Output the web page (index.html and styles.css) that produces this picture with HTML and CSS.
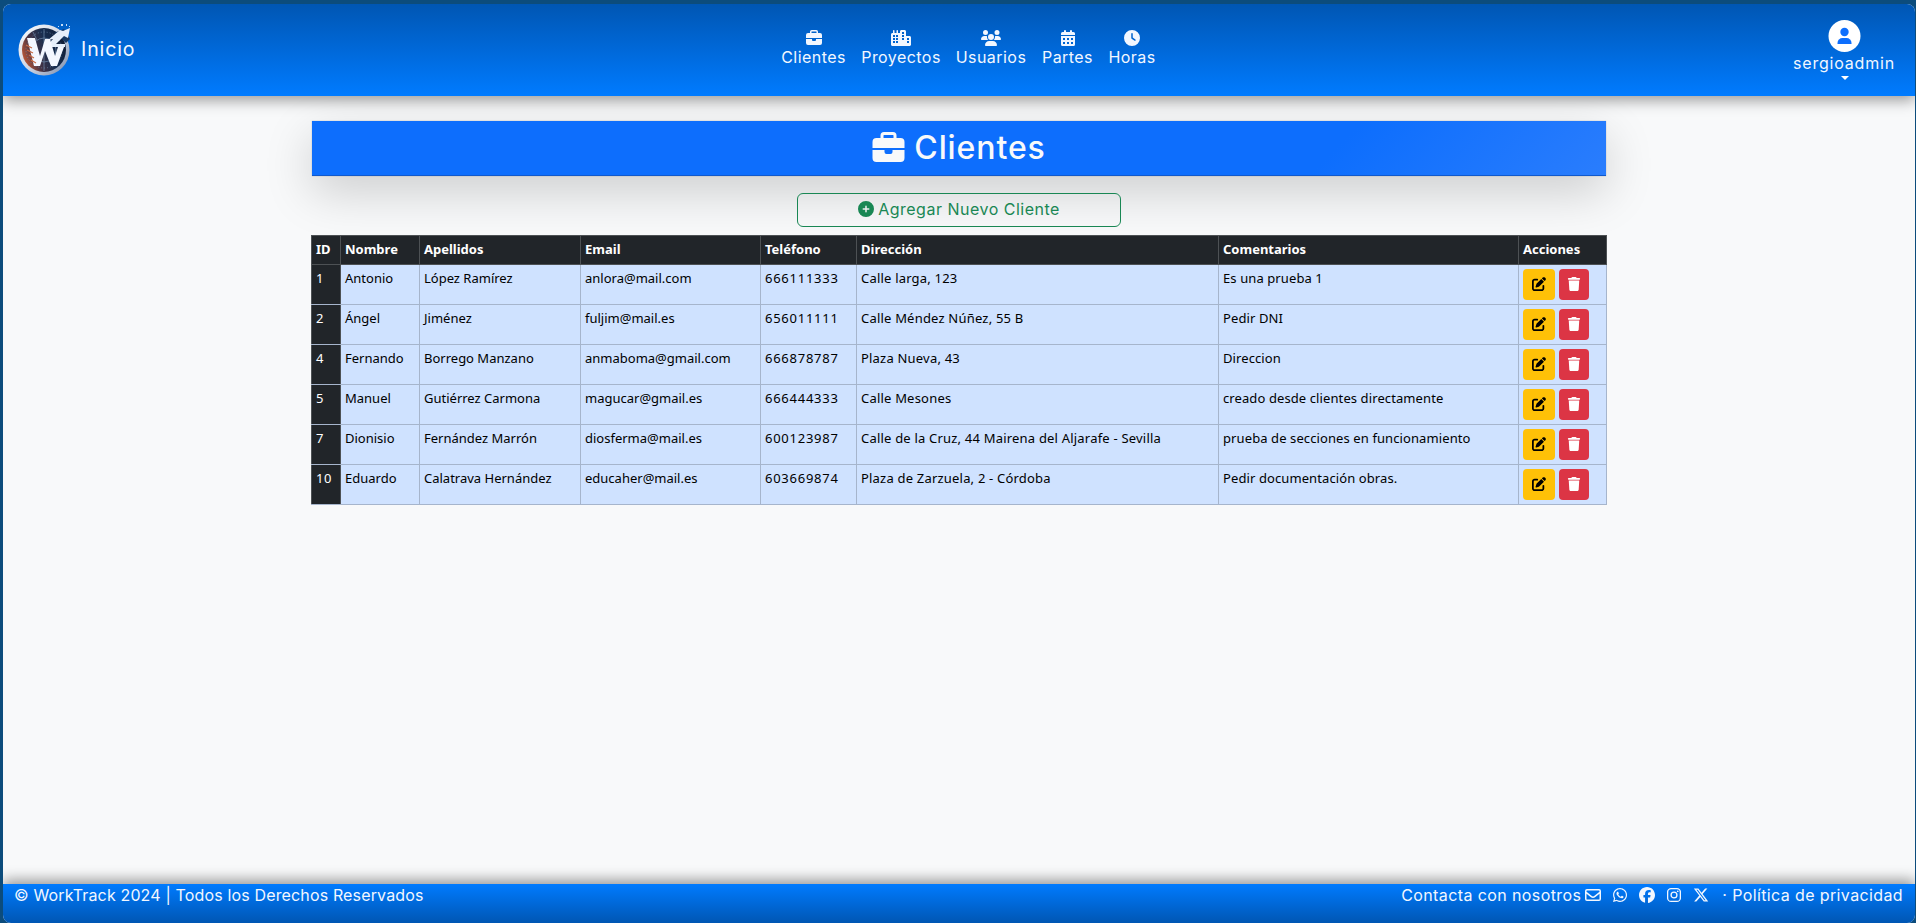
FILE: index.html
```html
<!DOCTYPE html>
<html lang="es">
<head>
<meta charset="utf-8">
<title>WorkTrack - Clientes</title>
<link rel="stylesheet" href="styles.css">
</head>
<body>
<svg class="defs" aria-hidden="true">
  <symbol id="briefcase" viewBox="0 0 512 512"><path fill-rule="evenodd" d="M184 0H328a56 56 0 0 1 56 56V96H448a64 64 0 0 1 64 64V256H0V160A64 64 0 0 1 64 96H128V56A56 56 0 0 1 184 0zM184 48a8 8 0 0 0-8 8V96H336V56a8 8 0 0 0-8-8zM0 288H192V320a32 32 0 0 0 32 32H288a32 32 0 0 0 32-32V288H512V416a64 64 0 0 1-64 64H64a64 64 0 0 1-64-64z"/></symbol>
  <symbol id="city" viewBox="0 0 640 512"><path fill-rule="evenodd" d="M480 48c0-26.500-21.500-48-48-48H336c-26.500 0-48 21.500-48 48V96H224V24a24 24 0 0 0-48 0V96H112V24a24 24 0 0 0-48 0V96H48C21.500 96 0 117.500 0 144V464c0 26.500 21.500 48 48 48H592c26.500 0 48-21.500 48-48V240c0-26.500-21.500-48-48-48H480zM64 160h64v64H64zM160 160h64v64h-64zM64 256h64v64H64zM160 256h64v64h-64zM64 352h64v64H64zM160 352h64v64h-64zM352 64h64v64h-64zM352 160h64v64h-64zM352 256h64v64h-64zM512 256h64v64h-64zM512 352h64v64h-64z"/></symbol>
  <symbol id="users" viewBox="0 0 640 512"><path d="M144 0a80 80 0 1 1 0 160A80 80 0 1 1 144 0zM512 0a80 80 0 1 1 0 160A80 80 0 1 1 512 0zM0 298.700C0 239.800 47.800 192 106.700 192h42.700c15.900 0 31 3.500 44.600 9.700c-1.300 7.200-1.900 14.700-1.900 22.300c0 38.200 16.800 72.500 43.300 96H21.300C9.600 320 0 310.400 0 298.700zM404.600 320c26.600-23.500 43.300-57.800 43.300-96c0-7.600-.7-15-1.900-22.300c13.600-6.300 28.700-9.700 44.600-9.700h42.700C592.200 192 640 239.800 640 298.700c0 11.800-9.600 21.300-21.300 21.300zM224 224a96 96 0 1 1 192 0 96 96 0 1 1-192 0zM128 485.300C128 411.700 187.700 352 261.300 352H378.700C452.300 352 512 411.700 512 485.300c0 14.700-11.900 26.700-26.700 26.700H154.700c-14.700 0-26.700-11.900-26.700-26.700z"/></symbol>
  <symbol id="calendar" viewBox="0 0 448 512"><path fill-rule="evenodd" d="M128 0a32 32 0 0 1 32 32V64H288V32a32 32 0 0 1 64 0V64h48a48 48 0 0 1 48 48v48H0V112A48 48 0 0 1 48 64H96V32a32 32 0 0 1 32-32zM0 192H448V464a48 48 0 0 1-48 48H48a48 48 0 0 1-48-48zM64 256v64h64v-64zM192 256v64h64v-64zM320 256v64h64v-64zM64 384v64h64v-64zM192 384v64h64v-64zM320 384v64h64v-64z"/></symbol>
  <symbol id="clock" viewBox="0 0 512 512"><path fill-rule="evenodd" d="M256 0a256 256 0 1 1 0 512A256 256 0 1 1 256 0zM232 120V256c0 8 4 15.500 10.700 20l96 64c11 7.400 25.900 4.400 33.300-6.700s4.400-25.900-6.700-33.300L280 243.200V120a24 24 0 0 0-48 0z"/></symbol>
  <symbol id="plus" viewBox="0 0 512 512"><path fill-rule="evenodd" d="M256 512A256 256 0 1 0 256 0a256 256 0 1 0 0 512zM232 344V280H168a24 24 0 0 1 0-48h64V168a24 24 0 0 1 48 0v64h64a24 24 0 0 1 0 48H280v64a24 24 0 0 1-48 0z"/></symbol>
  <symbol id="edit" viewBox="0 0 512 512"><path d="M471.600 21.700c-21.900-21.900-57.300-21.900-79.200 0L362.300 51.700l97.900 97.900 30.100-30.100c21.900-21.900 21.900-57.300 0-79.200zM172.400 241.700c-6.100 6.100-10.800 13.600-13.500 21.900l-29.600 88.800c-2.900 8.600-.6 18.100 5.800 24.600s15.900 8.700 24.600 5.800l88.800-29.600c8.200-2.700 15.700-7.400 21.900-13.500L437.700 172.300 339.700 74.300zM96 64C43 64 0 107 0 160V416c0 53 43 96 96 96H352c53 0 96-43 96-96V320a32 32 0 0 0-64 0v96a32 32 0 0 1-32 32H96a32 32 0 0 1-32-32V160a32 32 0 0 1 32-32h96a32 32 0 0 0 0-64z"/></symbol>
  <symbol id="trash" viewBox="0 0 448 512"><path d="M135.200 17.700L128 32H32a32 32 0 0 0 0 64H416a32 32 0 0 0 0-64H320l-7.200-14.300C307.400 6.800 296.300 0 284.200 0H163.800c-12.100 0-23.200 6.800-28.600 17.700zM416 128H32L53.200 467c1.600 25.300 22.600 45 47.900 45H346.900c25.300 0 46.300-19.700 47.900-45z"/></symbol>
  <symbol id="mail" viewBox="0 0 512 512"><path fill-rule="evenodd" d="M64 112a16 16 0 0 0-16 16v22.100L220.500 291.700c20.700 17 50.400 17 71.100 0L464 150.100V128a16 16 0 0 0-16-16zM48 212.200V384a16 16 0 0 0 16 16H448a16 16 0 0 0 16-16V212.200L322 328.800c-38.400 31.500-93.700 31.500-132 0zM0 128A64 64 0 0 1 64 64H448a64 64 0 0 1 64 64V384a64 64 0 0 1-64 64H64a64 64 0 0 1-64-64z"/></symbol>
  <symbol id="whatsapp" viewBox="0 0 448 512"><path d="M380.900 97.100C339 55.100 283.200 32 223.900 32c-122.400 0-222 99.600-222 222 0 39.100 10.200 77.300 29.600 111L0 480l117.700-30.900c32.400 17.700 68.900 27 106.100 27h.1c122.300 0 224.100-99.600 224.100-222 0-59.300-25.200-115-67.100-157zm-157 341.600c-33.200 0-65.700-8.900-94-25.700l-6.700-4-69.800 18.300L72 359.200l-4.400-7c-18.500-29.400-28.200-63.300-28.200-98.200 0-101.700 82.800-184.500 184.600-184.500 49.300 0 95.600 19.200 130.400 54.100 34.800 34.900 56.200 81.200 56.100 130.500 0 101.800-84.900 184.600-186.600 184.600zm101.200-138.200c-5.500-2.800-32.800-16.200-37.900-18-5.100-1.900-8.800-2.800-12.500 2.800-3.700 5.600-14.300 18-17.600 21.800-3.200 3.700-6.500 4.200-12 1.400-32.600-16.300-54-29.100-75.500-66-5.700-9.800 5.700-9.100 16.300-30.300 1.800-3.700.9-6.900-.5-9.700-1.400-2.800-12.500-30.100-17.100-41.200-4.500-10.800-9.100-9.300-12.500-9.500-3.200-.2-6.900-.2-10.600-.2-3.700 0-9.700 1.400-14.800 6.900-5.100 5.600-19.400 19-19.400 46.300 0 27.300 19.900 53.700 22.600 57.400 2.800 3.700 39.100 59.700 94.800 83.800 35.200 15.200 49 16.500 66.600 13.900 10.700-1.600 32.800-13.400 37.400-26.400 4.600-13 4.600-24.100 3.200-26.400-1.300-2.500-5-3.900-10.500-6.600z"/></symbol>
  <symbol id="facebook" viewBox="0 0 512 512"><path d="M512 256C512 114.600 397.400 0 256 0S0 114.600 0 256c0 120 82.700 220.800 194.200 248.500V334.200h-52.800V256h52.800v-33.700c0-87.100 39.400-127.500 125-127.500 16.200 0 44.200 3.200 55.700 6.400V172c-6-.6-16.500-1-29.600-1-42 0-58.200 15.900-58.200 57.200V256h83.600l-14.400 78.200h-69.300v175.900C413.800 494.800 512 386.900 512 256z"/></symbol>
  <symbol id="instagram" viewBox="0 0 448 512"><rect x="20" y="52" width="408" height="408" rx="112" fill="none" stroke="currentColor" stroke-width="42"/><circle cx="224" cy="256" r="94" fill="none" stroke="currentColor" stroke-width="42"/><circle cx="344" cy="136" r="27"/></symbol>
  <symbol id="x" viewBox="0 0 512 512"><path fill-rule="evenodd" d="M389.200 48h70.600L305.600 224.200 487 464H345L233.700 318.600 106.500 464H35.800L200.700 275.500 26.800 48H172.400L272.900 180.900zM364.400 421.800h39.100L151.100 88h-42z"/></symbol>
</svg>
<div class="page">
  <header class="navbar">
    <a class="brand">
      <svg class="logo" viewBox="0 0 54 54">
        <defs>
          <linearGradient id="rim" x1="0" y1="0" x2="1" y2="1"><stop offset="0" stop-color="#fff"/><stop offset=".55" stop-color="#cbd3e2"/><stop offset="1" stop-color="#7486a6"/></linearGradient>
          <linearGradient id="dial" x1="0" y1=".7" x2="1" y2=".3"><stop offset="0" stop-color="#c55b35"/><stop offset=".3" stop-color="#443244"/><stop offset=".6" stop-color="#172e50"/><stop offset="1" stop-color="#101c35"/></linearGradient>
        </defs>
        <circle cx="26" cy="28" r="25.500" fill="url(#rim)"/>
        <circle cx="26" cy="28" r="22" fill="url(#dial)"/>
        <g fill="none" stroke="#708baa" stroke-width=".7"><circle cx="26" cy="28" r="18" stroke-dasharray="1 2"/><circle cx="26" cy="28" r="12"/><path d="M26 7v42M15 10l4 8M35 45l-3-7"/></g>
        <path d="M36 11l10-4 6 10-4 4-5-5z" fill="#173963"/>
        <path d="M30 18l12-10 3 1 7-3-2 10-4-2-8 8h9v3H30v-2l5-6z" fill="#e6effb"/>
        <path d="M9 16h8l5 18 5-17h5l5 17 3-9h6l-7 19h-6l-6-15-5 15h-6z" fill="#f4f7ff"/>
        <path d="M8 23l6 3M9 28l6 3M11 33l5 3M13 38l5 3" stroke="#c96b45" stroke-width="1.200"/>
        <path d="M43 2h2v2h-2zM48 2h1v2h-1zM40 4h1v1h-1zM51 4h1v1h-1z" fill="#c6ddf6"/>
      </svg>
      <span class="brand-text">Inicio</span>
    </a>
    <nav class="menu">
      <a class="item clientes"><svg class="w16"><use href="#briefcase"/></svg><span>Clientes</span></a>
      <a class="item proyectos"><svg class="w20"><use href="#city"/></svg><span>Proyectos</span></a>
      <a class="item usuarios"><svg class="w20"><use href="#users"/></svg><span>Usuarios</span></a>
      <a class="item partes"><svg class="w14"><use href="#calendar"/></svg><span>Partes</span></a>
      <a class="item horas"><svg class="w16"><use href="#clock"/></svg><span>Horas</span></a>
    </nav>
    <a class="user">
      <svg class="avatar" viewBox="0 0 32 32"><circle cx="16" cy="16" r="16" fill="#fff"/><circle cx="16" cy="12" r="4.200" fill="#0d6efd"/><path d="M9 24v-1a5 5 0 0 1 5-5h4a5 5 0 0 1 5 5v1z" fill="#0d6efd"/></svg>
      <span>sergioadmin</span>
      <i class="caret"></i>
    </a>
  </header>
  <main class="content">
    <h1 class="title"><svg><use href="#briefcase"/></svg><span>Clientes</span></h1>
    <a class="add"><svg><use href="#plus"/></svg><span>Agregar Nuevo Cliente</span></a>
    <table class="clients">
      <colgroup><col class="c-id"><col class="c-name"><col class="c-last"><col class="c-mail"><col class="c-tel"><col class="c-dir"><col class="c-com"><col class="c-act"></colgroup>
      <thead><tr><th>ID</th><th>Nombre</th><th>Apellidos</th><th>Email</th><th>Teléfono</th><th>Dirección</th><th>Comentarios</th><th>Acciones</th></tr></thead>
      <tbody>
        <tr><td class="id">1</td><td>Antonio</td><td>López Ramírez</td><td>anlora@mail.com</td><td class="tel">666111333</td><td class="dir">Calle larga, 123</td><td class="com">Es una prueba 1</td><td class="act"><div class="actions"><a class="btn edit"><svg><use href="#edit"/></svg></a><a class="btn del"><svg><use href="#trash"/></svg></a></div></td></tr>
        <tr><td class="id">2</td><td>Ángel</td><td>Jiménez</td><td>fuljim@mail.es</td><td class="tel">656011111</td><td class="dir">Calle Méndez Núñez, 55 B</td><td class="com">Pedir DNI</td><td class="act"><div class="actions"><a class="btn edit"><svg><use href="#edit"/></svg></a><a class="btn del"><svg><use href="#trash"/></svg></a></div></td></tr>
        <tr><td class="id">4</td><td>Fernando</td><td>Borrego Manzano</td><td>anmaboma@gmail.com</td><td class="tel">666878787</td><td class="dir">Plaza Nueva, 43</td><td class="com">Direccion</td><td class="act"><div class="actions"><a class="btn edit"><svg><use href="#edit"/></svg></a><a class="btn del"><svg><use href="#trash"/></svg></a></div></td></tr>
        <tr><td class="id">5</td><td>Manuel</td><td>Gutiérrez Carmona</td><td>magucar@gmail.es</td><td class="tel">666444333</td><td class="dir">Calle Mesones</td><td class="com">creado desde clientes directamente</td><td class="act"><div class="actions"><a class="btn edit"><svg><use href="#edit"/></svg></a><a class="btn del"><svg><use href="#trash"/></svg></a></div></td></tr>
        <tr><td class="id">7</td><td>Dionisio</td><td>Fernández Marrón</td><td>diosferma@mail.es</td><td class="tel">600123987</td><td class="dir">Calle de la Cruz, 44 Mairena del Aljarafe - Sevilla</td><td class="com">prueba de secciones en funcionamiento</td><td class="act"><div class="actions"><a class="btn edit"><svg><use href="#edit"/></svg></a><a class="btn del"><svg><use href="#trash"/></svg></a></div></td></tr>
        <tr><td class="id">10</td><td>Eduardo</td><td>Calatrava Hernández</td><td>educaher@mail.es</td><td class="tel">603669874</td><td class="dir">Plaza de Zarzuela, 2 - Córdoba</td><td class="com">Pedir documentación obras.</td><td class="act"><div class="actions"><a class="btn edit"><svg><use href="#edit"/></svg></a><a class="btn del"><svg><use href="#trash"/></svg></a></div></td></tr>
      </tbody>
    </table>
  </main>
  <footer class="footer">
    <span class="copy">© WorkTrack 2024 | Todos los Derechos Reservados</span>
    <div class="contact">
      <span class="contact-text">Contacta con nosotros</span>
      <div class="social"><svg class="w16"><use href="#mail"/></svg><svg class="w14"><use href="#whatsapp"/></svg><svg class="w16"><use href="#facebook"/></svg><svg class="w14"><use href="#instagram"/></svg><svg class="w16"><use href="#x"/></svg></div>
      <span class="privacy">· Política de privacidad</span>
    </div>
  </footer>
</div>
</body>
</html>
```
FILE: styles.css
```css
* { box-sizing: border-box; }
html, body { height: 100%; }
body { margin: 0; padding: 4px 1px 0 3px; overflow: hidden; background: #0c4c7c; font: 16px/24px Inter, sans-serif; }
svg { display: block; fill: currentColor; flex: none; }
.defs { display: none; }
.page { height: 919px; display: flex; flex-direction: column; background: #f8f9fa; border-radius: 8px; overflow: hidden; }
.navbar { height: 92px; flex: none; display: grid; grid-template-columns: 1fr auto 1fr; background: linear-gradient(#0056b3, #007bff); color: #f2f7ff; box-shadow: 0 4px 14px rgba(0,0,0,.4); z-index: 1; }
.brand { display: flex; align-items: center; padding: 0 0 3px 15px; }
.logo { width: 54px; height: 54px; }
.brand-text { font-size: 19.500px; margin-left: 9px; letter-spacing: .9px; }
.menu { display: flex; gap: 17px; padding: 26px 0 0 18px; }
.item { display: flex; flex-direction: column; align-items: center; white-space: nowrap; }
.item span { margin-top: -1px; letter-spacing: .45px; }
.clientes { width: 64px; } .proyectos { width: 77px; } .usuarios { width: 69px; } .partes { width: 50px; } .horas { width: 45px; }
.w16 { width: 16px; height: 16px; }
.w20 { width: 20px; height: 16px; }
.w14 { width: 14px; height: 16px; }
.user { justify-self: end; display: flex; flex-direction: column; align-items: center; width: 102px; margin-right: 20px; padding-top: 16px; }
.avatar { width: 33px; height: 32px; }
.user span { margin-top: -1px; letter-spacing: .8px; }
.caret { margin: 1px 0 0 2px; border: 4px solid transparent; border-top-color: #fff; border-bottom: 0; }
.content { flex: 1; width: 1296px; margin: 0 auto; display: flex; flex-direction: column; align-items: center; padding-top: 25px; }
.title { margin: 0; width: 1294px; height: 55px; padding-bottom: 2px; display: flex; justify-content: center; align-items: center; gap: 9px; font-size: 32px; font-weight: 500; line-height: 38px; color: #f8f9fa; background: linear-gradient(135deg, #0d6efd 78%, #2a7dfd); box-shadow: inset 0 -1px #1059cc, 0 0 1px rgba(0,0,0,.3), 0 16px 48px rgba(0,0,0,.175); }
.title svg { width: 33px; height: 32px; }
.title span { letter-spacing: .9px; }
.add { width: 324px; height: 34px; flex: none; margin: 17px 0 8px; padding-bottom: 2px; border: 1px solid #198754; border-radius: 6px; display: flex; align-items: center; justify-content: center; gap: 4px; color: #198754; }
.add svg { width: 16px; height: 16px; }
.add span { letter-spacing: .5px; }
.clients { width: 1296px; table-layout: fixed; border-collapse: collapse; font: 13px/20px "Noto Sans", sans-serif; color: #000; }
.c-id { width: 29px; } .c-name { width: 79px; } .c-last { width: 161px; } .c-mail { width: 180px; } .c-tel { width: 96px; } .c-dir { width: 362px; } .c-com { width: 300px; } .c-act { width: 88px; }
.clients th, .clients td { text-align: left; vertical-align: top; padding: 3px 0 0 4px; white-space: nowrap; border: 1px solid #a6b5cc; }
.clients th { height: 29px; background: #212529; color: #fff; border-color: #4d5154; }
.clients td { height: 40px; background: #cfe2ff; }
.clients .act { padding-top: 4px; }
.clients .id { background: #212529; color: #fff; border-left-color: #4d5154; border-right-color: #4d5154; letter-spacing: .5px; }
.tel { letter-spacing: .75px; }
.dir { letter-spacing: .2px; }
.com { letter-spacing: .1px; }
.actions { display: flex; gap: 4px; }
.btn { height: 31px; padding-bottom: 1px; border-radius: 4px; display: flex; align-items: center; justify-content: center; }
.edit { width: 32px; background: #ffc107; color: #000; }
.del { width: 30px; background: #dc3545; color: #fff; }
.btn svg { width: 14px; height: 14px; }
.footer { height: 39px; flex: none; display: flex; justify-content: space-between; padding: 0 12px 0 11px; line-height: 22px; background: linear-gradient(#007bff, #0056b3); color: #f2f7ff; box-shadow: 0 -4px 14px rgba(0,0,0,.4); white-space: nowrap; }
.contact { display: flex; }
.copy { letter-spacing: .15px; }
.contact-text { letter-spacing: .4px; }
.privacy { letter-spacing: .38px; }
.social { display: flex; gap: 12px; margin: 3px 13px 0 4px; }
```
